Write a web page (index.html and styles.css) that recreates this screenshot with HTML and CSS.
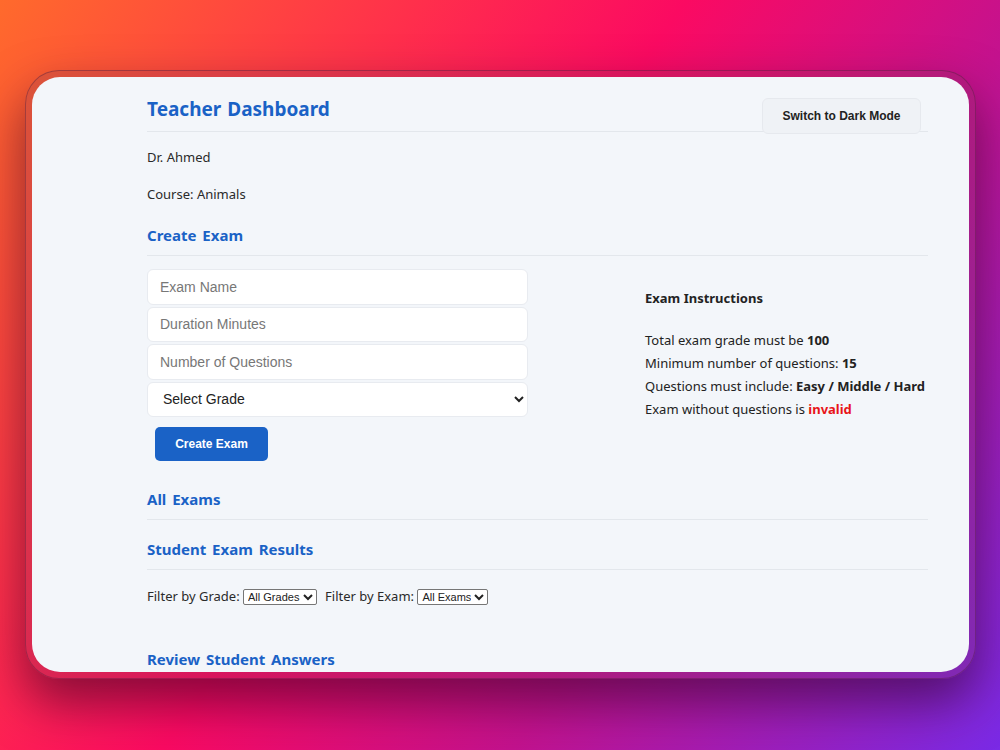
FILE: index.html
```html
<!DOCTYPE html>
<html lang="en">
  <head>
    <meta charset="UTF-8" />
    <meta name="viewport" content="width=device-width, initial-scale=1.0" />
    <title>Teacher Dashboard</title>
    <link rel="stylesheet" href="styles.css">
  </head>

  <body>
    <div class="frame">
      <div class="card">
        <div class="page">
          <header class="top">
            <h1>Teacher Dashboard</h1>
            <button class="mode-btn">Switch to Dark Mode</button>
          </header>

          <p class="info">Dr. Ahmed</p>
          <p class="info">Course: Animals</p>

          <h2 class="first">Create Exam</h2>

          <div class="exam-row">
            <form class="exam-form">
              <input type="text" placeholder="Exam Name" />
              <input type="text" placeholder="Duration Minutes" />
              <input type="text" placeholder="Number of Questions" />
              <select>
                <option>Select Grade</option>
              </select>
              <button type="button" class="create-btn">Create Exam</button>
            </form>

            <div class="instructions">
              <h3>Exam Instructions</h3>
              <p>Total exam grade must be <b>100</b></p>
              <p>Minimum number of questions: <b>15</b></p>
              <p>Questions must include: <b>Easy / Middle / Hard</b></p>
              <p>Exam without questions is <b class="bad">invalid</b></p>
            </div>
          </div>

          <h2 class="after-form">All Exams</h2>

          <h2>Student Exam Results</h2>

          <div class="filters">
            <label>Filter by Grade:
              <select class="small-select"><option>All Grades</option></select>
            </label>
            <label>Filter by Exam:
              <select class="small-select"><option>All Exams</option></select>
            </label>
          </div>

          <h2 class="review">Review Student Answers</h2>
        </div>
      </div>
    </div>
  </body>
</html>
```

FILE: styles.css
```css
html, body {
  margin: 0;
  height: 100%;
}

body {
  width: 1000px;
  height: 750px;
  overflow: hidden;
  background: linear-gradient(125deg, #ff6a2c 0%, #ff2e4c 28%, #fb0a62 45%, #c4128e 68%, #7a2ae6 100%);
  font-family: "Noto Sans", "Open Sans", sans-serif;
  padding-top: 70px;
  box-sizing: border-box;
}

.frame {
  margin-left: 25px;
  width: 937px;
  height: 595px;
  padding: 6px;
  border: 1px solid rgba(80, 30, 60, 0.4);
  border-radius: 34px;
  background: rgba(110, 50, 80, 0.25);
  box-shadow: 0 24px 50px rgba(40, 0, 30, 0.55);
}

.card {
  height: 100%;
  border-radius: 28px;
  background: #f3f6fa;
  overflow: hidden;
}

.page {
  padding: 20px 41px 0 115px;
  color: #222;
}

.top {
  display: flex;
  justify-content: space-between;
  align-items: flex-start;
  border-bottom: 1px solid #e3e7ec;
  height: 34px;
}

h1 {
  margin: 0;
  padding-top: 1px;
  font-size: 19px;
  font-weight: 700;
  color: #1a62c6;
  line-height: 22px;
  word-spacing: 1px;
}

.mode-btn {
  margin: 1px 7px 0 0;
  width: 159px;
  height: 36px;
  border: 1px solid #e6e9ee;
  border-radius: 6px;
  background: #eff2f6;
  font-family: "Liberation Sans", Arial, sans-serif;
  font-size: 12px;
  font-weight: 700;
  color: #222;
}

.info {
  margin: 16px 0 0;
  font-size: 13px;
  line-height: 18px;
  color: #2a2a2a;
}

.info + .info {
  margin-top: 19px;
}

h2 {
  margin: 19px 0 0;
  padding-bottom: 10px;
  border-bottom: 1px solid #e3e7ec;
  font-size: 15px;
  line-height: 20px;
  font-weight: 700;
  color: #1a62c6;
  word-spacing: 2px;
}

h2.first {
  margin-top: 22px;
}

h2.after-form {
  margin-top: 28px;
}

.exam-row {
  display: grid;
  grid-template-columns: 498px 1fr;
  margin-top: 13px;
}

.exam-form {
  display: flex;
  flex-direction: column;
  width: 381px;
  gap: 2px;
}

.exam-form input,
.exam-form select {
  height: 35.5px;
  box-sizing: border-box;
  border: 1px solid #e8ebf0;
  border-radius: 6px;
  background: #fff;
  padding: 0 12px;
  font-family: "Liberation Sans", Arial, sans-serif;
  font-size: 14px;
  color: #222;
}

.exam-form input::placeholder {
  color: #777;
}

.exam-form select {
  padding-left: 11px;
}

.create-btn {
  margin: 8px 0 0 8px;
  width: 113px;
  height: 34px;
  border: none;
  border-radius: 5px;
  background: #1a62c6;
  color: #fff;
  font-family: "Liberation Sans", Arial, sans-serif;
  font-size: 12px;
  font-weight: 700;
}

.instructions {
  padding-top: 20px;
  font-size: 13px;
  color: #222;
}

.instructions h3 {
  margin: 0 0 22px;
  font-size: 13px;
  line-height: 18px;
  font-weight: 700;
}

.instructions p {
  margin: 0;
  line-height: 23px;
}

.instructions .bad {
  color: #e81418;
}

.filters {
  margin-top: 17px;
  display: flex;
  gap: 8px;
  font-size: 13px;
  color: #2a2a2a;
}

.small-select {
  font-family: "Liberation Sans", Arial, sans-serif;
  font-size: 11px;
  color: #222;
  border: 1px solid #767676;
  border-radius: 2px;
  background: #fff;
  height: 16px;
  padding: 0;
}

h2.review {
  margin-top: 44px;
}
```
